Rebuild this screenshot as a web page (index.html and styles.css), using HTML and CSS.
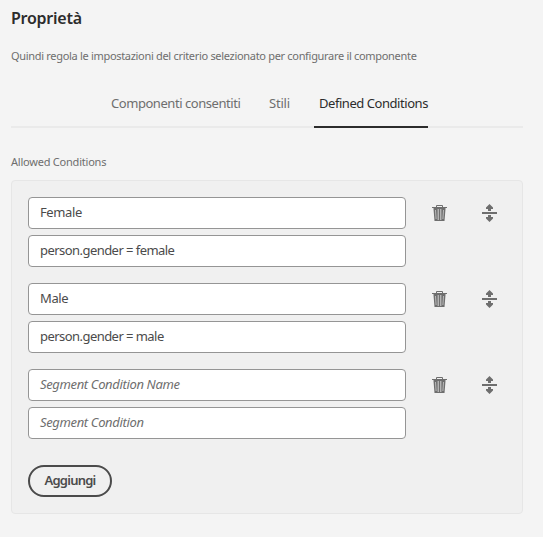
FILE: index.html
```html
<!DOCTYPE html>
<html lang="it">
<head>
<meta charset="utf-8">
<title>Proprietà</title>
<link rel="stylesheet" href="styles.css">
</head>
<body>
<svg class="sprite" aria-hidden="true">
  <symbol id="trash" viewBox="0 0 15 18">
    <path d="M4.500 3V1.500h6V3" fill="none" stroke="currentColor"/>
    <path d="M0 3h15v1h-1.500v1L12.500 17h-10L1.500 5V4H0z" fill="currentColor"/>
    <path d="M3.500 6l.6 9M11.500 6l-.6 9" fill="none" stroke="#c4c4c4" stroke-width=".9"/>
    <path d="M6.200 5v11M8.800 5v11" fill="none" stroke="#e0e0e0" stroke-width=".9"/>
  </symbol>
  <symbol id="move" viewBox="0 0 15 18">
    <path d="M0 8h15v2H0zM7.500 0L11 3.500V5H9v2H6V5H4V3.500zM7.500 18l3.500-3.500V13H9v-2H6v2H4v1.500z" fill="currentColor"/>
  </symbol>
</svg>
<main class="properties">
  <h1 class="title">Proprietà</h1>
  <p class="description">Quindi regola le impostazioni del criterio selezionato per configurare il componente</p>
  <nav class="tabs">
    <a class="tab tab-components">Componenti consentiti</a>
    <a class="tab tab-styles">Stili</a>
    <a class="tab tab-selected">Defined Conditions</a>
  </nav>
  <div class="label">Allowed Conditions</div>
  <section class="panel">
    <div class="condition">
      <div class="fields"><div class="field">Female</div><div class="field expression">person.gender = female</div></div>
      <svg class="icon trash"><use href="#trash"/></svg><svg class="icon move"><use href="#move"/></svg>
    </div>
    <div class="condition">
      <div class="fields"><div class="field">Male</div><div class="field expression">person.gender = male</div></div>
      <svg class="icon trash"><use href="#trash"/></svg><svg class="icon move"><use href="#move"/></svg>
    </div>
    <div class="condition">
      <div class="fields"><div class="field placeholder">Segment Condition Name</div><div class="field placeholder">Segment Condition</div></div>
      <svg class="icon trash"><use href="#trash"/></svg><svg class="icon move"><use href="#move"/></svg>
    </div>
    <button class="add">Aggiungi</button>
  </section>
</main>
</body>
</html>
```
FILE: styles.css
```css
* { box-sizing: border-box; }
body {
  margin: 0;
  background: #f4f4f4;
  color: #4b4b4b;
  font: 13px/18px "Noto Sans", "Open Sans", sans-serif;
}
.sprite { display: none; }
.properties { padding: 7px 20px 0 11px; }
.title { margin: 0; font-size: 16px; line-height: 22px; font-weight: 600; color: #2c2c2c; letter-spacing: -.25px; }
.description { margin: 18px 0 0; font-size: 11px; line-height: 18px; color: #6e6e6e; letter-spacing: -.31px; white-space: nowrap; }
.tabs {
  display: flex;
  height: 48px;
  margin-top: 15px;
  padding-left: 100px;
  border-bottom: 2px solid #eaeaea;
}
.tab { height: 48px; line-height: 46px; color: #6e6e6e; white-space: nowrap; letter-spacing: -.45px; }
.tab-components { width: 158px; }
.tab-styles { width: 45px; letter-spacing: -.2px; }
.tab-selected { width: 114px; padding-left: 5px; color: #2c2c2c; border-bottom: 2px solid #2c2c2c; }
.label { margin-top: 25px; height: 27px; font-size: 11px; line-height: 18px; color: #6e6e6e; letter-spacing: -.22px; }
.panel { height: 334px; padding: 16px; background: #f0f0f0; border: 1px solid #e6e6e6; border-radius: 4px; }
.condition { display: flex; align-items: flex-start; margin-bottom: 16px; }
.fields { display: grid; gap: 6px; width: 378px; }
.field { height: 32px; padding: 0 11px; border: 1px solid #959595; border-radius: 4px; background: #fff; line-height: 29px; white-space: nowrap; letter-spacing: -.4px; }
.expression { letter-spacing: -.55px; }
.placeholder { color: #6e6e6e; font-style: italic; letter-spacing: -.35px; }
.icon { width: 15px; height: 18px; margin-top: 7px; color: #6e6e6e; }
.trash { margin-left: 26px; }
.move { margin-left: 35px; }
.add { display: block; width: 84px; height: 32px; margin-top: 26px; padding: 0 0 2px; border: 2px solid #4b4b4b; border-radius: 16px; background: transparent; color: #4b4b4b; font: 600 13px/26px "Noto Sans", sans-serif; letter-spacing: -.75px; }
```
